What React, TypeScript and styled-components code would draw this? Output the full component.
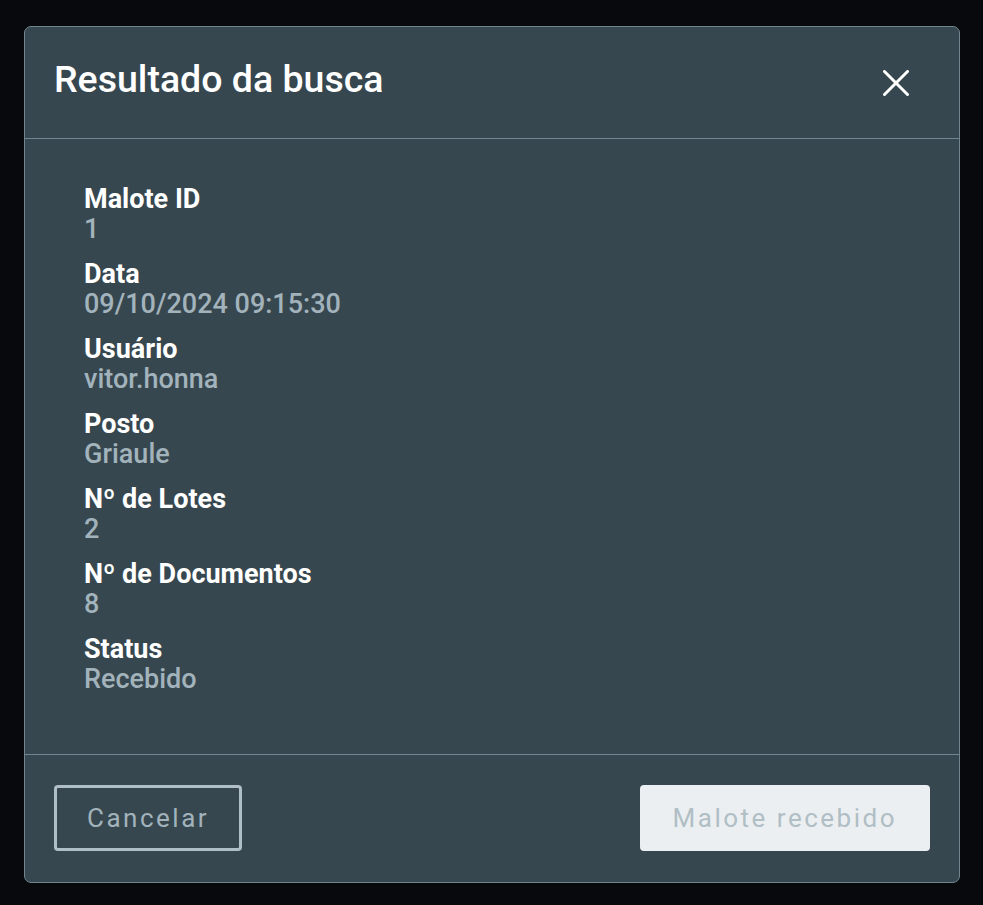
import styled, { createGlobalStyle } from "styled-components";

const fields = [
  { label: "Malote ID", value: "1" },
  { label: "Data", value: "09/10/2024 09:15:30" },
  { label: "Usuário", value: "vitor.honna" },
  { label: "Posto", value: "Griaule" },
  { label: "Nº de Lotes", value: "2" },
  { label: "Nº de Documentos", value: "8" },
  { label: "Status", value: "Recebido" },
];

function App() {
  return (
    <>
      <GlobalStyle />
      <S.Page>
        <S.Modal>
          <S.Header>
            <S.Title>Resultado da busca</S.Title>
            <S.Close aria-label="Fechar">
              <svg width="26" height="26" viewBox="0 0 26 26">
                <path
                  d="M1.5 1.5 L24.5 24.5 M24.5 1.5 L1.5 24.5"
                  stroke="#ffffff"
                  strokeWidth="3"
                  strokeLinecap="round"
                />
              </svg>
            </S.Close>
          </S.Header>
          <S.Body>
            {fields.map((f) => (
              <S.Field key={f.label}>
                <S.Label>{f.label}</S.Label>
                <S.Value>{f.value}</S.Value>
              </S.Field>
            ))}
          </S.Body>
          <S.Footer>
            <S.Button $variant="outline">Cancelar</S.Button>
            <S.Button $variant="filled" disabled>
              Malote recebido
            </S.Button>
          </S.Footer>
        </S.Modal>
      </S.Page>
    </>
  );
}

const GlobalStyle = createGlobalStyle`
  html, body {
    margin: 0;
    background: #07090d;
  }
  body {
    font-family: Roboto, "Liberation Sans", sans-serif;
  }
`;

//@styled
const S = {
  Page: styled.main`
    width: 983px;
    height: 905px;
    box-sizing: border-box;
    padding: 26px 23px 0 24px;
    background: #07090d;
  `,
  Modal: styled.section`
    width: 936px;
    box-sizing: border-box;
    background: #37474f;
    border: 1px solid #71858f;
    border-radius: 7px;
    display: flex;
    flex-direction: column;
  `,
  Header: styled.header`
    height: 112px;
    box-sizing: border-box;
    padding: 0 38px 0 29px;
    display: flex;
    align-items: center;
    justify-content: space-between;
    border-bottom: 1px solid #71858f;
  `,
  Title: styled.h2`
    margin: 0;
    padding-bottom: 7px;
    font-size: 37.5px;
    font-weight: 500;
    color: #ffffff;
  `,
  Close: styled.button`
    border: none;
    background: transparent;
    padding: 0;
    width: 50px;
    height: 50px;
    display: flex;
    align-items: center;
    justify-content: center;
    cursor: pointer;
  `,
  Body: styled.div`
    height: 616px;
    box-sizing: border-box;
    padding: 45px 59px 43px;
    display: flex;
    flex-direction: column;
    gap: 15px;
    border-bottom: 1px solid #71858f;
  `,
  Field: styled.div`
    display: flex;
    flex-direction: column;
  `,
  Label: styled.span`
    font-size: 27px;
    line-height: 30px;
    font-weight: 700;
    color: #ffffff;
  `,
  Value: styled.span`
    font-size: 27px;
    line-height: 30px;
    font-weight: 500;
    color: #a2b3bc;
  `,
  Footer: styled.footer`
    padding: 30px 29px 31px;
    display: flex;
    justify-content: space-between;
  `,
  Button: styled.button<{ $variant: "outline" | "filled" }>`
    height: 66px;
    box-sizing: border-box;
    padding: 0 30px;
    border-radius: 4px;
    border: 3px solid
      ${({ $variant }) => ($variant === "outline" ? "#b0bec5" : "#eceff1")};
    background: ${({ $variant }) =>
      $variant === "outline" ? "transparent" : "#eceff1"};
    color: ${({ $variant }) => ($variant === "outline" ? "#a2b3bc" : "#b0bec5")};
    font-family: Roboto, "Liberation Sans", sans-serif;
    font-size: 26px;
    font-weight: 400;
    letter-spacing: 2.5px;
  `,
};

export default App;
